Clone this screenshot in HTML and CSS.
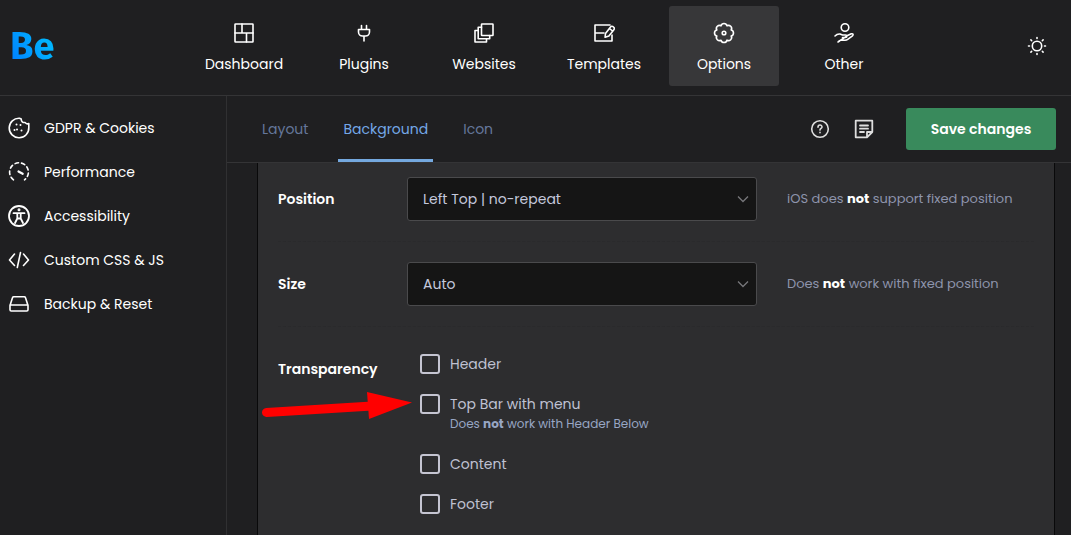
FILE: index.html
```
<!DOCTYPE html>
<html lang="en">
<head>
<meta charset="utf-8">
<meta name="viewport" content="width=device-width, initial-scale=1">
<title>Be – Theme options</title>
<link rel="stylesheet" href="styles.css">
</head>
<body>
<div class="app">
  <header class="header">
    <a class="logo" href="#">Be</a>
    <nav class="nav" aria-label="Main">
      <a class="nav-item" href="#">
        <svg class="icon" viewBox="0 0 22 22"><rect x="2" y="2" width="18" height="18" rx="0.5"/><path d="M2 11h18M9 2v9M13.500 11v9"/></svg>
        <span>Dashboard</span>
      </a>
      <a class="nav-item" href="#">
        <svg class="icon" viewBox="0 0 22 22"><path d="M8.500 3.500v4M13.500 3.500v4M5.500 7.500h11v2.500a4 4 0 0 1-4 4h-3a4 4 0 0 1-4-4zM11 14v5"/></svg>
        <span>Plugins</span>
      </a>
      <a class="nav-item" href="#">
        <svg class="icon" viewBox="0 0 22 22"><rect x="8.500" y="2" width="11.500" height="11.500" rx="0.500"/><path d="M8.500 5.200H5.200v11.500h11.500v-3.200M5.200 8.500H2V20h11.500v-3.300"/></svg>
        <span>Websites</span>
      </a>
      <a class="nav-item" href="#">
        <svg class="icon" viewBox="0 0 22 22"><path d="M17 3H2v16h17v-6M2 11h9"/><path d="M12.500 11.500l5-6.500a1.800 1.800 0 0 1 2.600-.3l.5.400a1.800 1.800 0 0 1 .3 2.600l-5 6.300-3.800 1.200zM16.500 6.500l3 2.500"/></svg>
        <span>Templates</span>
      </a>
      <a class="nav-item nav-item-active" href="#" aria-current="page">
        <svg class="icon" viewBox="0 0 22 22"><path d="M18.210 13.990A3.100 3.100 0 0 1 13.990 18.210A3.100 3.100 0 0 1 8.010 18.210A3.100 3.100 0 0 1 3.790 13.990A3.100 3.100 0 0 1 3.790 8.010A3.100 3.100 0 0 1 8.010 3.790A3.100 3.100 0 0 1 13.990 3.790A3.100 3.100 0 0 1 18.210 8.010A3.100 3.100 0 0 1 18.210 13.990Z"/><circle cx="11" cy="11" r="1.800"/></svg>
        <span>Options</span>
      </a>
      <a class="nav-item" href="#">
        <svg class="icon" viewBox="0 0 22 22"><circle cx="12" cy="5.500" r="3.800"/><path d="M2 14c1.500-1.600 3-2.300 5-2l2.500 1h3c1.800 0 1.800 2.500 0 2.500H9.500M14 13.800l4.300-2c1.700-.5 2.400 1 1.200 2l-4.800 3.600c-.8.600-1.700.8-2.700.8H8c-1 0-2 .5-3 1.800z"/></svg>
        <span>Other</span>
      </a>
    </nav>
    <button class="icon-button" type="button" aria-label="Toggle theme">
      <svg class="icon" viewBox="0 0 22 22"><circle cx="11" cy="11" r="4.700"/><path d="M11 2.500v1M11 18.500v1M2.500 11h1M18.500 11h1M4.900 4.900l.8.8M16.300 16.300l.8.8M4.900 17.100l.8-.8M16.300 5.700l.8-.8"/></svg>
    </button>
  </header>
  <div class="body">
    <nav class="sidebar" aria-label="Sections">
      <a class="side-item" href="#">
        <svg class="icon" viewBox="0 0 22 22"><path d="M11.500 1.200A9.800 9.800 0 1 0 20.800 10.500V6.500c-1.500.8-2.900.4-3.600-1-2.500.3-4-1-4-3.500z"/><path class="dots" d="M8.500 7.500h.01M6.500 13h.01M9 12.500h.01M13.500 13.500h.01M12.500 8h.01"/></svg>
        <span>GDPR &amp; Cookies</span>
      </a>
      <a class="side-item" href="#">
        <svg class="icon" viewBox="0 0 22 22"><path class="gauge" d="M5.500 18.800A9.400 9.400 0 1 1 16.500 18.800"/><path class="needle" d="M10.500 10.500l4.200 2.300"/></svg>
        <span>Performance</span>
      </a>
      <a class="side-item" href="#">
        <svg class="icon icon-bold" viewBox="0 0 22 22"><circle cx="11" cy="11" r="10"/><path d="M5.500 8.200h11M9.300 8.500v5L7 18M12.700 8.500v5L15 18M9.300 13.500h3.400"/><circle class="solid" cx="11" cy="4.800" r="0.600"/></svg>
        <span>Accessibility</span>
      </a>
      <a class="side-item" href="#">
        <svg class="icon" viewBox="0 0 22 22"><path d="M6.500 5L1.500 11l5 5.500M15.500 5l5 6-5 5.500M12.500 3.500l-3.200 15"/></svg>
        <span>Custom CSS &amp; JS</span>
      </a>
      <a class="side-item" href="#">
        <svg class="icon" viewBox="0 0 22 22"><path d="M2 12.500L4.500 4.700q.3-.9 1.200-.9h10.600q.9 0 1.200.9L20 12.500v4.300q0 1.200-1.200 1.200H3.200Q2 18 2 16.800zM2 12h18"/></svg>
        <span>Backup &amp; Reset</span>
      </a>
    </nav>
    <main class="main">
      <div class="toolbar">
        <nav class="tabs" aria-label="Global options">
          <a class="tab" href="#">Layout</a>
          <a class="tab tab-active" href="#" aria-current="page">Background</a>
          <a class="tab" href="#">Icon</a>
        </nav>
        <div class="actions">
          <button class="icon-button" type="button" aria-label="Help">
            <svg class="icon" viewBox="0 0 22 22"><circle cx="11" cy="11" r="8.300"/><path d="M9 9.200c0-2.800 4-2.800 4-.3 0 1.600-2 1.400-2 3.200M11 14.300v.5"/></svg>
          </button>
          <button class="icon-button" type="button" aria-label="Notes">
            <svg class="icon icon-bold" viewBox="0 0 22 22"><path d="M19.300 14V2.700H2.700v16.600H14zM14 19v-5h5M7 7.500h8M7 10.700h8M7 14h4"/></svg>
          </button>
          <button class="save" type="button">Save changes</button>
        </div>
      </div>
      <form class="panel">
        <div class="row">
          <label class="row-label" for="position">Position</label>
          <div class="select-wrap">
            <select class="select" id="position"><option>Left Top | no-repeat</option></select>
            <svg class="chevron" viewBox="0 0 12 12"><path d="M1 3.500l5 5 5-5"/></svg>
          </div>
          <p class="hint">iOS does <b>not</b> support fixed position</p>
        </div>
        <div class="row">
          <label class="row-label" for="size">Size</label>
          <div class="select-wrap">
            <select class="select" id="size"><option>Auto</option></select>
            <svg class="chevron" viewBox="0 0 12 12"><path d="M1 3.500l5 5 5-5"/></svg>
          </div>
          <p class="hint">Does <b>not</b> work with fixed position</p>
        </div>
        <div class="row" role="group" aria-labelledby="transparency">
          <span class="row-label" id="transparency">Transparency</span>
          <div class="checks">
            <label class="check"><input class="box" type="checkbox"><span>Header</span></label>
            <label class="check"><input class="box" type="checkbox"><span>Top Bar with menu<small class="note">Does <b>not</b> work with Header Below</small></span></label>
            <label class="check"><input class="box" type="checkbox"><span>Content</span></label>
            <label class="check"><input class="box" type="checkbox"><span>Footer</span></label>
          </div>
          <svg class="arrow" viewBox="0 0 150 28" aria-hidden="true"><path class="shaft" d="M4.500 20.500L110 14"/><path class="head" d="M105 0L150 10.500 107 27z"/></svg>
        </div>
      </form>
    </main>
  </div>
</div>
</body>
</html>
```
FILE: styles.css
```
* {
  box-sizing: border-box;
}

body {
  margin: 0;
  background: #1f1f21;
  color: #fff;
  font-family: Poppins, Inter, "Open Sans", sans-serif;
  font-size: 14px;
  line-height: 20px;
}

a {
  color: inherit;
  text-decoration: none;
}

button,
select {
  font: inherit;
}

.app {
  display: flex;
  flex-direction: column;
  min-height: 100vh;
}

.header {
  display: flex;
  align-items: center;
  padding: 6px 23px 9px 10px;
  border-bottom: 1px solid #343436;
}

.logo {
  flex: 0 0 179px;
  font-family: "Fira Sans", Roboto, sans-serif;
  font-size: 38px;
  font-weight: 700;
  line-height: 44px;
  background: linear-gradient(60deg, #0080ff 5px, #00b4ff 44px);
  background-clip: text;
  -webkit-background-clip: text;
  color: transparent;
}

.nav {
  display: flex;
  gap: 10px;
}

.nav-item {
  display: flex;
  flex-direction: column;
  align-items: center;
  gap: 10px;
  width: 110px;
  height: 80px;
  padding-top: 16px;
  border-radius: 3px;
}

.nav-item-active {
  background: #373739;
}

.icon {
  display: block;
  flex: none;
  width: 22px;
  height: 22px;
  fill: none;
  stroke: currentColor;
  stroke-width: 1.6;
  stroke-linecap: round;
  stroke-linejoin: round;
}

.icon-bold {
  stroke-width: 1.8;
}

.icon .dots {
  stroke-width: 2;
}

.icon .gauge {
  stroke-dasharray: 3.500 3;
}

.icon .needle {
  stroke-width: 2.2;
}

.icon .solid {
  fill: currentColor;
}

.icon-button {
  padding: 0;
  border: 0;
  background: none;
  color: inherit;
}

.header .icon-button {
  margin-left: auto;
}

.body {
  display: flex;
  flex: 1;
}

.sidebar {
  display: flex;
  flex: 0 0 227px;
  flex-direction: column;
  gap: 22px;
  padding: 21px 8px;
  border-right: 1px solid #303032;
}

.side-item {
  display: flex;
  align-items: center;
  gap: 14px;
}

.main {
  display: flex;
  flex: 1;
  flex-direction: column;
  min-width: 0;
}

.toolbar {
  display: flex;
  align-items: stretch;
  justify-content: space-between;
  height: 67px;
  padding: 0 15px 0 30px;
  border-bottom: 1px solid #343436;
}

.tabs {
  display: flex;
  gap: 25px;
}

.tab {
  display: flex;
  align-items: center;
  padding: 3px 5px 0;
  border-bottom: 3px solid transparent;
  color: #65779b;
}

.tab-active {
  border-color: #74a8df;
  border-radius: 2px 2px 0 0;
  color: #74a8e8;
}

.actions {
  display: flex;
  align-items: center;
  gap: 22px;
  color: #dedede;
}

.save {
  width: 150px;
  height: 42px;
  margin-left: 9px;
  border: 0;
  border-radius: 3px;
  background: #398a5c;
  color: #fff;
  font-weight: 600;
}

.panel {
  flex: 1;
  margin: 0 16px 0 30px;
  padding: 0 20px;
  border: solid #09090a;
  border-width: 0 1px;
  background: #2d2d2f;
}

.row {
  position: relative;
  display: grid;
  grid-template-columns: 99px minmax(0, 350px) minmax(0, 1fr);
  column-gap: 30px;
  padding: 20px 0;
  border-bottom: 1px dashed #2a2a2c;
}

.row:first-child {
  padding-top: 14px;
}

.row:last-child {
  border-bottom: 0;
}

.row-label {
  font-weight: 600;
  line-height: 44px;
}

.select-wrap {
  display: grid;
  align-items: center;
}

.select {
  grid-area: 1 / 1;
  width: 100%;
  height: 44px;
  padding: 0 36px 0 15px;
  appearance: none;
  border: 1px solid #4a4a4c;
  border-radius: 3px;
  background: #151515;
  color: #c4c8dc;
}

.chevron {
  grid-area: 1 / 1;
  justify-self: end;
  width: 12px;
  height: 12px;
  margin-right: 8px;
  fill: none;
  stroke: #77777b;
  stroke-width: 1.3;
  pointer-events: none;
}

.hint {
  margin: 0;
  color: #8d94ac;
  font-size: 13px;
  line-height: 44px;
}

.hint b {
  color: #fff;
}

.checks {
  display: flex;
  flex-direction: column;
  gap: 20px;
  padding: 7px 0 0 13px;
}

.check {
  display: flex;
  align-items: flex-start;
  gap: 10px;
  color: #bfc1d2;
}

.box {
  flex: none;
  width: 20px;
  height: 20px;
  margin: 0;
  appearance: none;
  border: 2px solid #c5c5d2;
  border-radius: 3px;
}

.box:checked {
  background: #74a8df;
}

.note {
  display: block;
  color: #98a6c4;
  font-size: 12px;
}

.arrow {
  position: absolute;
  top: 65px;
  left: -16px;
  width: 150px;
  height: 28px;
}

.shaft {
  fill: none;
  stroke: #f00;
  stroke-width: 9;
  stroke-linecap: round;
}

.head {
  fill: #f00;
}
```
